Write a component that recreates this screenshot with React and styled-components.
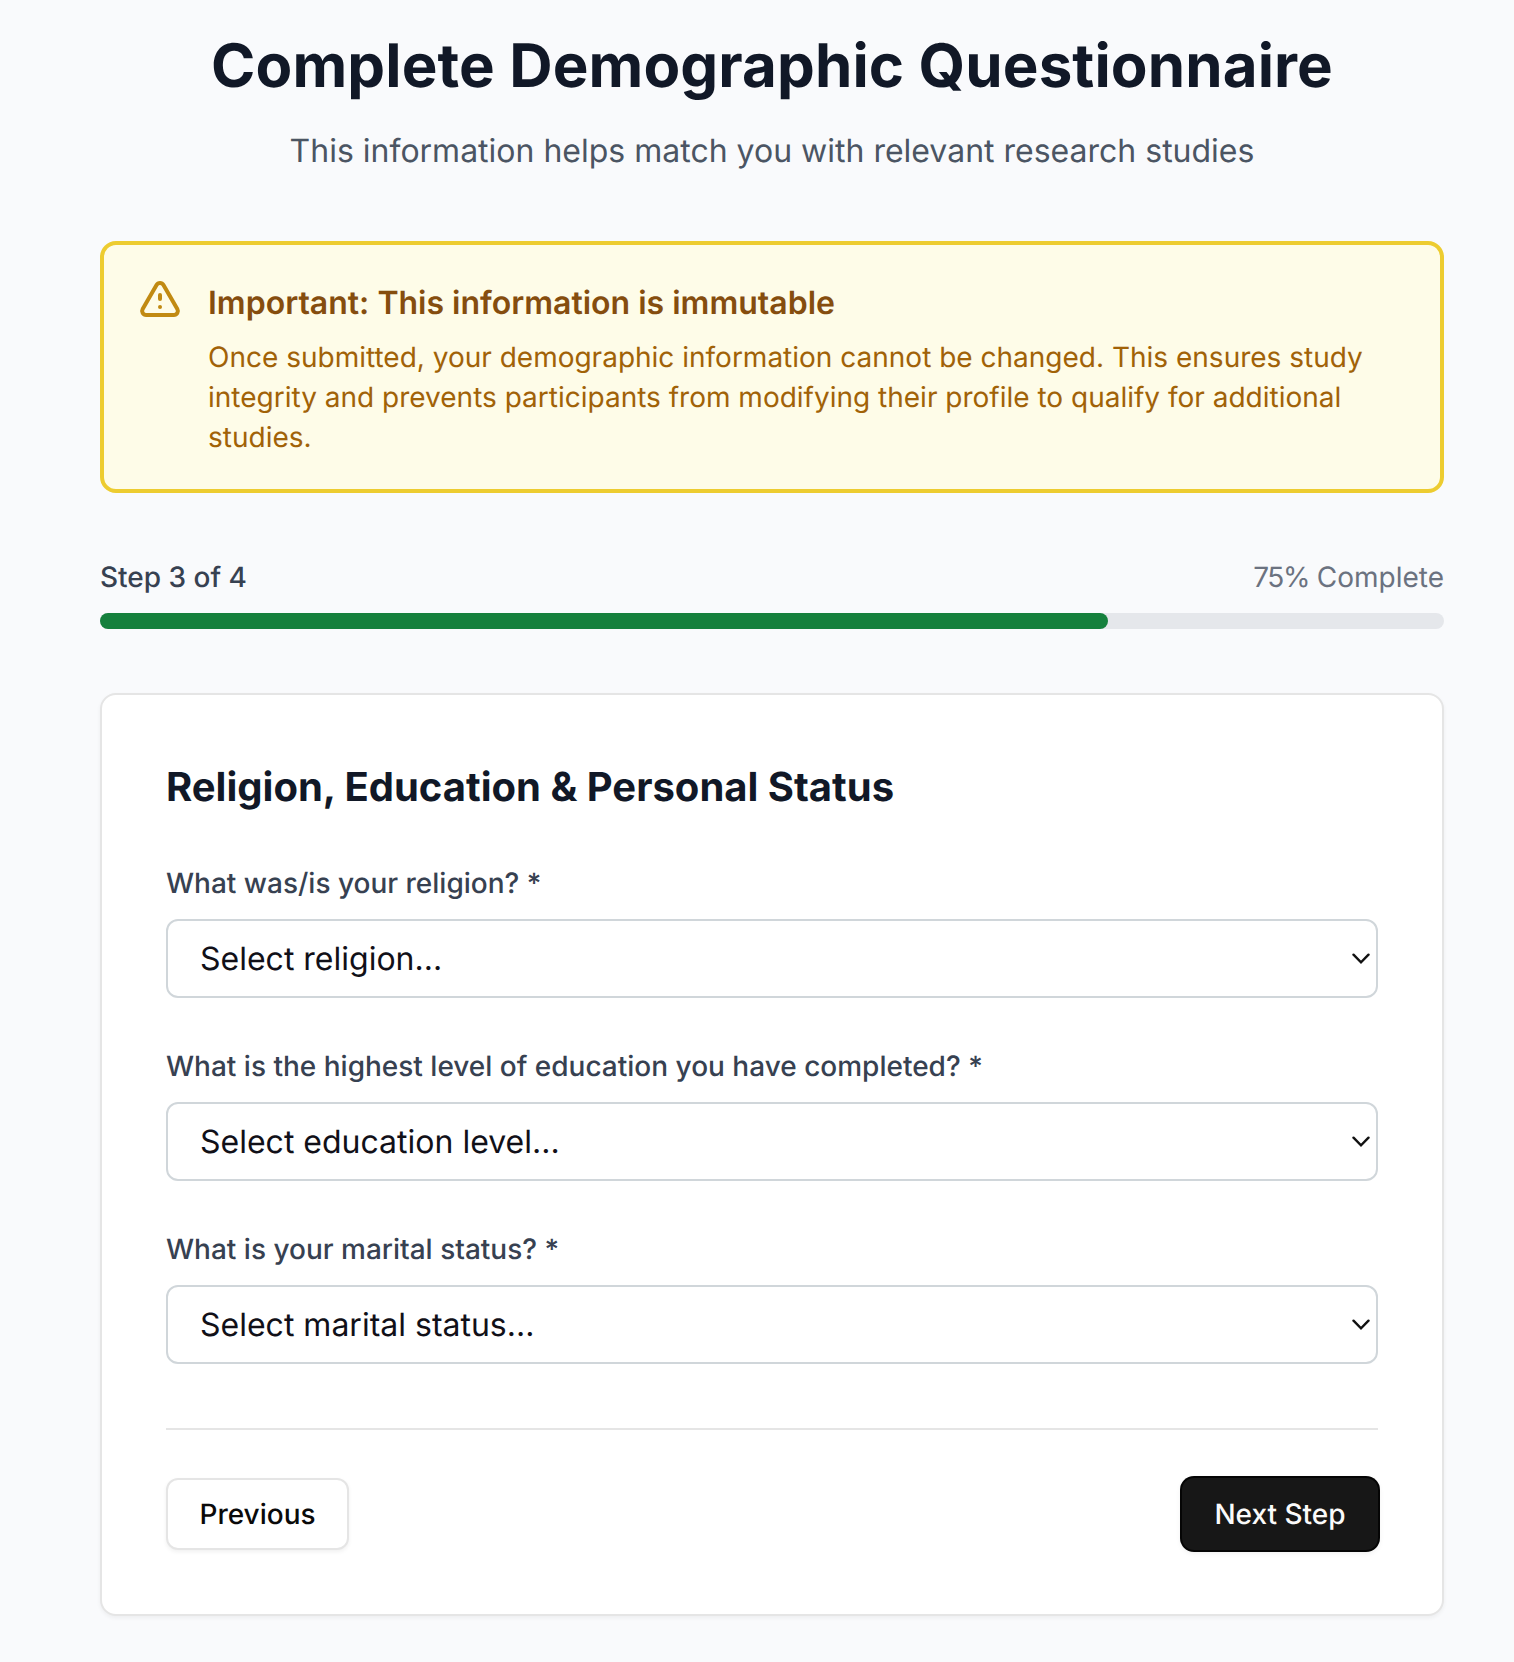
import React from "react";
import styled, { createGlobalStyle } from "styled-components";

const GlobalStyle = createGlobalStyle`
  *, *::before, *::after {
    box-sizing: border-box;
  }
  body {
    margin: 0;
    background: #f9fafc;
    font-family: "Inter", "Liberation Sans", sans-serif;
    font-optical-sizing: none;
    text-rendering: geometricPrecision;
    -webkit-font-smoothing: antialiased;
  }
  h1, h2, h3, p {
    margin: 0;
  }
`;

const Page = styled.main`
  min-height: 1662px;
  padding: 30px 70px 46px 100px;
`;
const Header = styled.header`
  margin-bottom: 64px;
  text-align: center;
`;
const Title = styled.h1`
  margin-bottom: 23px;
  font-size: 60px;
  font-weight: 700;
  line-height: 72px;
  letter-spacing: 0.12px;
  color: #111827;
`;
const Subtitle = styled.p`
  font-size: 32px;
  line-height: 52px;
  color: #4b5563;
`;
const Alert = styled.section`
  display: flex;
  align-items: flex-start;
  gap: 24px;
  margin-bottom: 64px;
  padding: 32px;
  border: 4px solid #edcc30;
  border-radius: 16px;
  background: #fefce8;
`;
const AlertIcon = styled.svg`
  flex-shrink: 0;
  width: 48px;
  height: 48px;
  color: #c18a12;
`;
const AlertTitle = styled.h3`
  margin-bottom: 8px;
  font-size: 32px;
  font-weight: 600;
  line-height: 52px;
  color: #854d0e;
`;
const AlertText = styled.p`
  font-size: 28px;
  line-height: 40px;
  color: #a16207;
`;
const Progress = styled.section`
  margin-bottom: 64px;
`;
const ProgressInfo = styled.div`
  display: flex;
  justify-content: space-between;
  margin-bottom: 16px;
  font-size: 28px;
  line-height: 40px;
`;
const ProgressStep = styled.span`
  font-weight: 500;
  color: #374151;
`;
const ProgressPercent = styled.span`
  color: #6b7280;
`;
const Percent = styled.span`
  letter-spacing: -1.5px;
`;
const Track = styled.div`
  height: 16px;
  border-radius: 8px;
  background: #e5e7eb;
`;
const Bar = styled.div`
  height: 100%;
  border-radius: 8px;
  background: #15803d;
`;
const Card = styled.section`
  padding: 64px;
  border: 2px solid #e5e5e5;
  border-radius: 16px;
  background: #fff;
  box-shadow: 0 2px 4px rgba(0, 0, 0, 0.05);
`;
const CardTitle = styled.h2`
  margin-bottom: 48px;
  font-size: 40px;
  font-weight: 700;
  line-height: 56px;
  color: #111827;
`;
const Fields = styled.div`
  display: flex;
  flex-direction: column;
  gap: 48px;
`;
const Field = styled.label`
  display: flex;
  flex-direction: column;
  gap: 16px;
`;
const FieldLabel = styled.span`
  font-size: 28px;
  font-weight: 500;
  line-height: 40px;
  color: #374151;
`;
const SelectBox = styled.span`
  display: grid;
  align-items: center;
  height: 79px;

  > * {
    grid-area: 1 / 1;
  }
`;
const Select = styled.select`
  appearance: none;
  width: 100%;
  height: 100%;
  padding: 0 32px;
  border: 2px solid #d0d6da;
  border-radius: 12px;
  background: #fff;
  font: inherit;
  font-size: 32px;
  text-rendering: inherit;
  color: #111018;
`;
const Chevron = styled.svg`
  justify-self: end;
  width: 18px;
  height: 12px;
  margin-right: 8px;
  pointer-events: none;
`;
const Actions = styled.div`
  display: flex;
  justify-content: space-between;
  margin-top: 64px;
  padding-top: 48px;
  border-top: 2px solid #e5e5e5;
`;
const Button = styled.button`
  width: ${({ $primary }) => ($primary ? "196px" : "183px")};
  height: 72px;
  padding: 0;
  border: ${({ $primary }) => ($primary ? "none" : "2px solid #e5e5e5")};
  border-radius: 12px;
  background: ${({ $primary }) => ($primary ? "#171717" : "#fff")};
  box-shadow: ${({ $primary }) =>
    $primary
      ? "0 0 0 2px #050505, 0 2px 6px rgba(0, 0, 0, 0.1)"
      : "0 2px 4px rgba(0, 0, 0, 0.06)"};
  font: inherit;
  font-size: 28px;
  font-weight: 500;
  text-rendering: inherit;
  color: ${({ $primary }) => ($primary ? "#fafafa" : "#0a0a0a")};
`;

const step = 3;
const totalSteps = 4;
const percent = (step / totalSteps) * 100;

const questions = [
  { label: "What was/is your religion? *", placeholder: "Select religion..." },
  {
    label: "What is the highest level of education you have completed? *",
    placeholder: "Select education level...",
  },
  {
    label: "What is your marital status? *",
    placeholder: "Select marital status...",
  },
];

const SelectField = ({ label, placeholder }) => {
  return (
    <Field>
      <FieldLabel>{label}</FieldLabel>
      <SelectBox>
        <Select defaultValue="">
          <option value="">{placeholder}</option>
        </Select>
        <Chevron viewBox="0 0 18 12" fill="none">
          <path
            d="M1.5 1.7 9 9.3l7.5-7.6"
            stroke="#111"
            strokeWidth="2.4"
            strokeLinecap="round"
          />
        </Chevron>
      </SelectBox>
    </Field>
  );
};

const App = () => {
  return (
    <>
      <GlobalStyle />
      <Page>
        <Header>
          <Title>Complete Demographic Questionnaire</Title>
          <Subtitle>
            This information helps match you with relevant research studies
          </Subtitle>
        </Header>
        <Alert>
          <AlertIcon viewBox="0 0 24 24" fill="none" stroke="currentColor">
            <path
              strokeLinecap="round"
              strokeLinejoin="round"
              strokeWidth="2"
              d="M12 9v2m0 4h.01m-6.938 4h13.856c1.54 0 2.502-1.667 1.732-3L13.732 4c-.77-1.333-2.694-1.333-3.464 0L3.34 16c-.77 1.333.192 3 1.732 3z"
            />
          </AlertIcon>
          <div>
            <AlertTitle>Important: This information is immutable</AlertTitle>
            <AlertText>
              Once submitted, your demographic information cannot be changed.
              This ensures study integrity and prevents participants from
              modifying their profile to qualify for additional studies.
            </AlertText>
          </div>
        </Alert>
        <Progress>
          <ProgressInfo>
            <ProgressStep>
              Step {step} of {totalSteps}
            </ProgressStep>
            <ProgressPercent>
              <Percent>{percent}%</Percent> Complete
            </ProgressPercent>
          </ProgressInfo>
          <Track>
            <Bar style={{ width: `${percent}%` }} />
          </Track>
        </Progress>
        <Card>
          <CardTitle>Religion, Education &amp; Personal Status</CardTitle>
          <Fields>
            {questions.map((item) => (
              <SelectField key={item.label} {...item} />
            ))}
          </Fields>
          <Actions>
            <Button type="button">Previous</Button>
            <Button type="button" $primary>
              Next Step
            </Button>
          </Actions>
        </Card>
      </Page>
    </>
  );
};

export default App;
